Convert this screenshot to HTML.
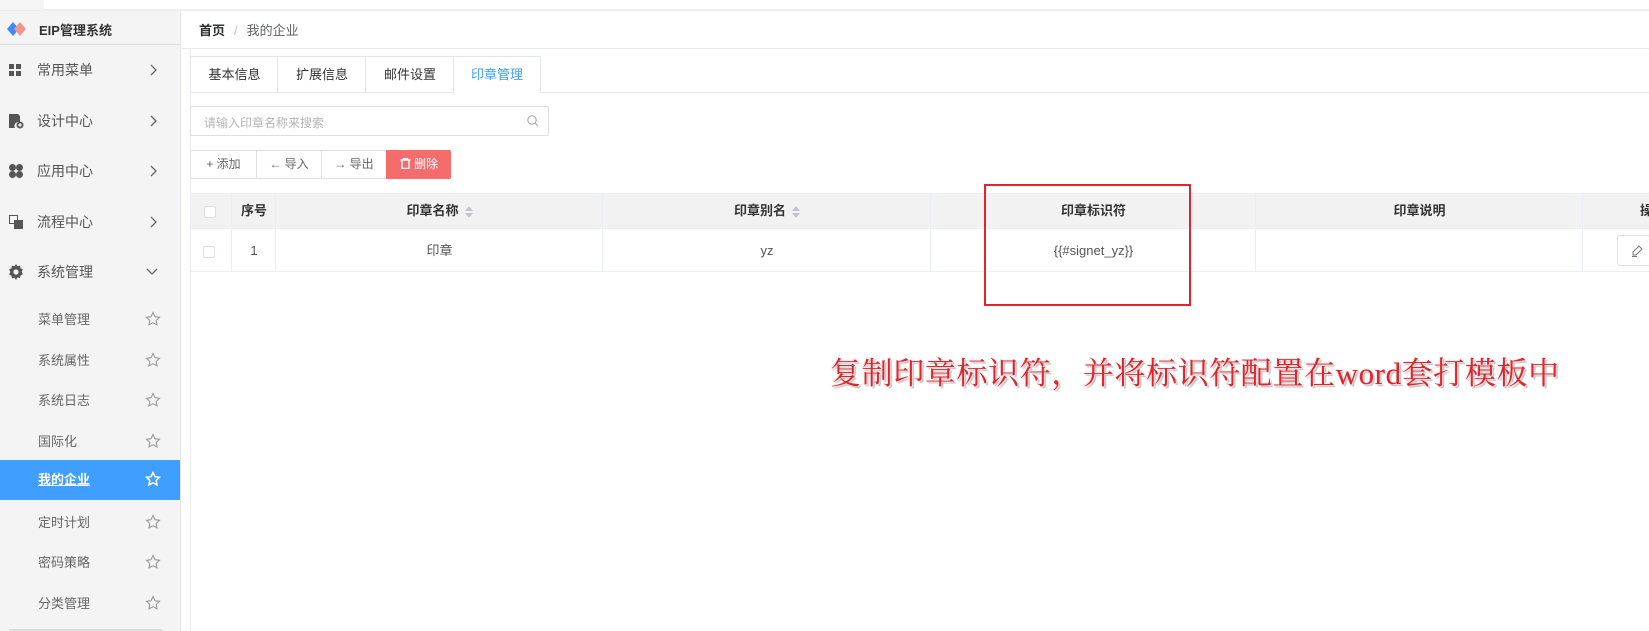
<!DOCTYPE html>
<html><head><meta charset="utf-8">
<style>
*{margin:0;padding:0;box-sizing:border-box}
body{width:1649px;height:631px;overflow:hidden;background:#fff;font-family:"Liberation Sans","Noto Sans CJK SC",sans-serif;font-size:13px;color:#333;position:relative}
.abs{position:absolute}
.side{left:0;top:11px;width:181px;height:620px;background:#f4f4f4;border-right:1px solid #e6e6e6}
.top{left:0;top:0;width:1649px;height:11px;background:#fff;border-bottom:2px solid #eceef2}
.mi{position:absolute;left:0;width:180px;height:40px;line-height:40px;font-size:14px;color:#555}
.mi .t{position:absolute;left:37px}
.mi .ar{position:absolute;left:150px;top:0;color:#666}
.si{position:absolute;left:0;width:180px;height:40px;line-height:40px;font-size:13px;color:#666}
.si .t{position:absolute;left:38px}
.si .st{position:absolute;left:145px;top:11px}
.act{background:#409eff;color:#fff;font-weight:bold}
.tab{position:absolute;top:56px;height:37px;line-height:36px;text-align:center;font-size:13px;border:1px solid #e4e7ed;border-right:none;background:#fff}
.btn{position:absolute;top:150px;height:29px;line-height:27px;border:1px solid #dcdfe6;font-size:12px;color:#666;text-align:center;border-right:none}
.cell{position:absolute;border-right:1px solid #ebeef5;text-align:center}
.cb{display:inline-block;width:12px;height:12px;border:1px solid #dcdfe6;background:#fff;border-radius:2px;vertical-align:middle}
.sort{display:inline-block;vertical-align:middle;margin-left:6px;width:8px;height:12px;position:relative}
.sort:before{content:"";position:absolute;left:0;top:0;border:4px solid transparent;border-bottom:5px solid #c0c4cc;border-top:none}
.sort:after{content:"";position:absolute;left:0;top:7px;border:4px solid transparent;border-top:5px solid #c0c4cc;border-bottom:none}
</style></head><body>
<div class="abs top"></div>
<div class="abs" style="left:0;top:0;width:44px;height:10px;background:#f5f5f5"></div>
<div class="abs side">
  <div class="abs" style="left:0;top:0;width:180px;height:34px;border-bottom:1px solid #ddd">
    <svg class="abs" style="left:7px;top:11px" width="20" height="14" viewBox="0 0 20 14"><path d="M6 0L0 7l6 7 6-7z" fill="#3d8cf5"/><path d="M13 0L7 7l6 7 6-7z" fill="#f0968b"/></svg>
    <span class="abs" style="left:39px;top:9px;font-weight:bold;font-size:13px;color:#333">EIP管理系统</span>
  </div>
</div>
<!-- menus -->
<div class="mi" style="top:50px"><svg class="abs" style="left:9px;top:14px" width="12" height="12"><rect x="0" y="0" width="5" height="5" fill="#555"/><rect x="7" y="0" width="5" height="5" fill="#555"/><rect x="0" y="7" width="5" height="5" fill="#555"/><rect x="7" y="7" width="5" height="5" fill="#555"/></svg><span class="t">常用菜单</span><svg class="ar" style="top:14px" width="8" height="12"><path d="M1 1l5 5-5 5" stroke="#666" stroke-width="1.3" fill="none"/></svg></div>
<div class="mi" style="top:101px"><svg class="abs" style="left:9px;top:13px" width="15" height="15"><path d="M0 0h9l2 2v6h-1a4 4 0 0 0-4 6H0z" fill="#555"/><circle cx="11" cy="11" r="3.5" fill="#555"/><path d="M11 9v4M9 11h4" stroke="#f4f4f4" stroke-width="1.2"/></svg><span class="t">设计中心</span><svg class="ar" style="top:14px" width="8" height="12"><path d="M1 1l5 5-5 5" stroke="#666" stroke-width="1.3" fill="none"/></svg></div>
<div class="mi" style="top:151px"><svg class="abs" style="left:9px;top:13px" width="14" height="14"><circle cx="3.5" cy="3.5" r="3.5" fill="#555"/><circle cx="10.5" cy="3.5" r="3.5" fill="#555"/><circle cx="3.5" cy="10.5" r="3.5" fill="#555"/><circle cx="10.5" cy="10.5" r="3.5" fill="#555"/></svg><span class="t">应用中心</span><svg class="ar" style="top:14px" width="8" height="12"><path d="M1 1l5 5-5 5" stroke="#666" stroke-width="1.3" fill="none"/></svg></div>
<div class="mi" style="top:202px"><svg class="abs" style="left:9px;top:13px" width="14" height="14"><rect x="0.5" y="0.5" width="8" height="8" fill="none" stroke="#555"/><rect x="5" y="5" width="9" height="9" fill="#555"/></svg><span class="t">流程中心</span><svg class="ar" style="top:14px" width="8" height="12"><path d="M1 1l5 5-5 5" stroke="#666" stroke-width="1.3" fill="none"/></svg></div>
<div class="mi" style="top:252px"><svg class="abs" style="left:8px;top:12px" width="16" height="16" viewBox="0 0 16 16"><path d="M8 0l1.5 2.2 2.6-.6.4 2.6 2.4 1.2-1.2 2.4 1.2 2.4-2.4 1.2-.4 2.6-2.6-.6L8 16l-1.5-2.2-2.6.6-.4-2.6L1.1 10.6 2.3 8 1.1 5.4 3.5 4.2l.4-2.6 2.6.6z" fill="#555"/><circle cx="8" cy="8" r="2.6" fill="#f4f4f4"/></svg><span class="t">系统管理</span><svg class="ar" style="top:16px;left:146px" width="12" height="8"><path d="M1 1l5 5 5-5" stroke="#666" stroke-width="1.3" fill="none"/></svg></div>
<!-- sub items -->
<div class="si" style="top:300px"><span class="t">菜单管理</span><svg class="st" width="16" height="16" viewBox="0 0 16 16"><path d="M8 1.5l2 4.2 4.5.6-3.3 3.1.8 4.5L8 11.7 4 13.9l.8-4.5L1.5 6.3 6 5.7z" fill="none" stroke="#999" stroke-width="1.1"/></svg></div>
<div class="si" style="top:341px"><span class="t">系统属性</span><svg class="st" width="16" height="16" viewBox="0 0 16 16"><path d="M8 1.5l2 4.2 4.5.6-3.3 3.1.8 4.5L8 11.7 4 13.9l.8-4.5L1.5 6.3 6 5.7z" fill="none" stroke="#999" stroke-width="1.1"/></svg></div>
<div class="si" style="top:381px"><span class="t">系统日志</span><svg class="st" width="16" height="16" viewBox="0 0 16 16"><path d="M8 1.5l2 4.2 4.5.6-3.3 3.1.8 4.5L8 11.7 4 13.9l.8-4.5L1.5 6.3 6 5.7z" fill="none" stroke="#999" stroke-width="1.1"/></svg></div>
<div class="si" style="top:422px"><span class="t">国际化</span><svg class="st" width="16" height="16" viewBox="0 0 16 16"><path d="M8 1.5l2 4.2 4.5.6-3.3 3.1.8 4.5L8 11.7 4 13.9l.8-4.5L1.5 6.3 6 5.7z" fill="none" stroke="#999" stroke-width="1.1"/></svg></div>
<div class="si act" style="top:460px;height:40px"><span class="t" style="text-decoration:underline">我的企业</span><svg class="st" width="16" height="16" viewBox="0 0 16 16"><path d="M8 1.5l2 4.2 4.5.6-3.3 3.1.8 4.5L8 11.7 4 13.9l.8-4.5L1.5 6.3 6 5.7z" fill="none" stroke="#fff" stroke-width="1.5"/></svg></div>
<div class="si" style="top:503px"><span class="t">定时计划</span><svg class="st" width="16" height="16" viewBox="0 0 16 16"><path d="M8 1.5l2 4.2 4.5.6-3.3 3.1.8 4.5L8 11.7 4 13.9l.8-4.5L1.5 6.3 6 5.7z" fill="none" stroke="#999" stroke-width="1.1"/></svg></div>
<div class="si" style="top:543px"><span class="t">密码策略</span><svg class="st" width="16" height="16" viewBox="0 0 16 16"><path d="M8 1.5l2 4.2 4.5.6-3.3 3.1.8 4.5L8 11.7 4 13.9l.8-4.5L1.5 6.3 6 5.7z" fill="none" stroke="#999" stroke-width="1.1"/></svg></div>
<div class="si" style="top:584px"><span class="t">分类管理</span><svg class="st" width="16" height="16" viewBox="0 0 16 16"><path d="M8 1.5l2 4.2 4.5.6-3.3 3.1.8 4.5L8 11.7 4 13.9l.8-4.5L1.5 6.3 6 5.7z" fill="none" stroke="#999" stroke-width="1.1"/></svg></div>
<div class="abs" style="left:9px;top:629px;width:153px;height:2px;background:#ddd"></div>

<!-- main -->
<div class="abs" style="left:182px;top:13px;width:1467px;height:36px;border-bottom:1px solid #e8e8e8"></div>
<div class="abs" style="left:199px;top:20px;font-size:13px"><b style="color:#303133">首页</b><span style="color:#c0c4cc;margin:0 9px">/</span><span style="color:#606266">我的企业</span></div>
<div class="abs" style="left:190px;top:48px;width:1px;height:583px;background:#eceef2"></div>
<div class="abs" style="left:190px;top:92px;width:1459px;height:1px;background:#e4e7ed"></div>
<div class="tab" style="left:190px;width:88px">基本信息</div>
<div class="tab" style="left:277px;width:89px">扩展信息</div>
<div class="tab" style="left:365px;width:89px">邮件设置</div>
<div class="tab" style="left:453px;width:88px;border-right:1px solid #e4e7ed;color:#409eff;border-bottom-color:#fff;height:37px">印章管理</div>

<div class="abs" style="left:190px;top:106px;width:359px;height:30px;border:1px solid #dcdfe6;border-radius:2px"><span class="abs" style="left:13px;top:7px;font-size:12px;color:#b4b4b4">请输入印章名称来搜索</span><svg class="abs" style="left:336px;top:8px" width="12" height="12"><circle cx="5" cy="5" r="4.2" fill="none" stroke="#aaa" stroke-width="1.1"/><path d="M8 8l3 3" stroke="#aaa" stroke-width="1.1"/></svg></div>

<div class="btn" style="left:190px;width:66px;border-radius:2px 0 0 2px">+ 添加</div>
<div class="btn" style="left:256px;width:65px">← 导入</div>
<div class="btn" style="left:321px;width:65px">→ 导出</div>
<div class="btn" style="left:386px;width:65px;background:#f56c6c;border-color:#f56c6c;color:#fff;border-radius:0 2px 2px 0"><svg width="11" height="11" style="vertical-align:-1px"><path d="M0.5 2h10M3.5 2V0.5h4V2M2 2v8.5h7V2" fill="none" stroke="#fff" stroke-width="1.4"/></svg> 删除</div>

<!-- table -->
<div class="abs" style="left:190px;top:193px;width:1459px;height:36px;background:#f2f2f2;border-top:1px solid #ebeef5;border-bottom:1px solid #ebeef5"></div>
<div class="abs" style="left:190px;top:271px;width:1459px;height:1px;background:#ebeef5"></div>
<div class="abs" style="left:190px;top:193px;width:1px;height:79px;background:#ebeef5"></div>
<div class="cell" style="left:190px;top:193px;width:42px;height:79px"></div>
<div class="cell" style="left:232px;top:193px;width:44px;height:79px"></div>
<div class="cell" style="left:276px;top:193px;width:327px;height:79px"></div>
<div class="cell" style="left:603px;top:193px;width:328px;height:79px"></div>
<div class="cell" style="left:931px;top:193px;width:325px;height:79px"></div>
<div class="cell" style="left:1256px;top:193px;width:327px;height:79px"></div>
<div class="abs" style="top:193px;left:190px;width:1459px;height:36px;line-height:36px;font-weight:bold;font-size:13px;color:#333">
 <span class="abs" style="left:14px;top:0"><span class="cb"></span></span>
 <span class="abs" style="left:42px;width:44px;text-align:center">序号</span>
 <span class="abs" style="left:86px;width:327px;text-align:center">印章名称<span class="sort"></span></span>
 <span class="abs" style="left:413px;width:328px;text-align:center">印章别名<span class="sort"></span></span>
 <span class="abs" style="left:741px;width:325px;text-align:center">印章标识符</span>
 <span class="abs" style="left:1066px;width:327px;text-align:center">印章说明</span>
 <span class="abs" style="left:1450px">操</span>
</div>
<div class="abs" style="top:229px;left:190px;width:1459px;height:43px;line-height:43px;font-size:13px;color:#555">
 <span class="abs" style="left:13px;top:0"><span class="cb"></span></span>
 <span class="abs" style="left:42px;width:44px;text-align:center">1</span>
 <span class="abs" style="left:86px;width:327px;text-align:center">印章</span>
 <span class="abs" style="left:413px;width:328px;text-align:center">yz</span>
 <span class="abs" style="left:741px;width:325px;text-align:center">{{#signet_yz}}</span>
</div>
<div class="abs" style="left:1617px;top:235px;width:40px;height:31px;border:1px solid #dcdfe6;border-radius:3px"><svg class="abs" style="left:13px;top:9px" width="12" height="12"><path d="M8 1l3 3-6 6H2V7z M1 11.5h5" fill="none" stroke="#777"/></svg></div>

<div class="abs" style="left:984px;top:184px;width:207px;height:122px;border:2px solid #e3222b"></div>
<div class="abs" style="left:830px;top:348px;white-space:nowrap;font-family:'Liberation Serif','Noto Serif CJK SC',serif;font-size:31px;letter-spacing:0.6px;color:#e3222b;text-shadow:1px 1px 0 #ddd,-1px -1px 0 #eee,2px 2px 1px #bbb">复制印章标识符，并将标识符配置在word套打模板中</div>
</body></html>
